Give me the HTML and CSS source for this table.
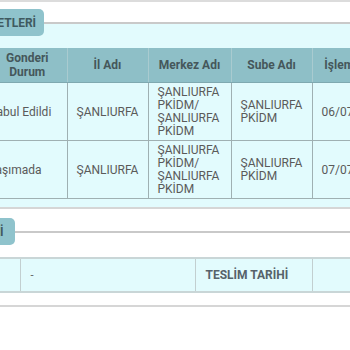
FILE: index.html
```html
<!DOCTYPE html>
<html lang="tr">
<head>
<meta charset="utf-8">
<link rel="stylesheet" href="styles.css">
</head>
<body>
<div class="page">
  <div class="top-rule"></div>

  <section class="block">
    <div class="block-head head-split">
      <span class="tab">GÖNDERİ HAREKETLERİ</span>
      <span class="line"></span>
    </div>
    <div class="panel">
      <table class="grid">
        <colgroup>
          <col class="c1"><col class="c2"><col class="c3"><col class="c4"><col class="c5">
        </colgroup>
        <thead>
          <tr>
            <th>Gonderi<br>Durum</th>
            <th>İl Adı</th>
            <th>Merkez Adı</th>
            <th>Sube Adı</th>
            <th>İşlem Tarihi</th>
          </tr>
        </thead>
        <tbody>
          <tr>
            <td>Kabul Edildi</td>
            <td>ŞANLIURFA</td>
            <td>ŞANLIURFA PKİDM/ ŞANLIURFA PKİDM</td>
            <td>ŞANLIURFA PKİDM</td>
            <td class="date">06/07/2023</td>
          </tr>
          <tr>
            <td>Taşımada</td>
            <td>ŞANLIURFA</td>
            <td>ŞANLIURFA PKİDM/ ŞANLIURFA PKİDM</td>
            <td>ŞANLIURFA PKİDM</td>
            <td class="date">07/07/2023</td>
          </tr>
        </tbody>
      </table>
    </div>
  </section>

  <section class="block block2">
    <div class="block-head">
      <span class="tab tab2">TESLİM BİLGİLERİ</span>
      <span class="line"></span>
    </div>
    <table class="info">
      <colgroup>
        <col class="i1"><col class="i2"><col class="i3"><col class="i4">
      </colgroup>
      <tr>
        <td></td>
        <td>-</td>
        <td class="lbl">TESLİM TARİHİ</td>
        <td></td>
      </tr>
    </table>
    <div class="bottom-rule"></div>
  </section>
</div>
</body>
</html>
```

FILE: styles.css
```css
html, body {
  margin: 0;
  padding: 0;
  overflow: hidden;
  background: #ffffff;
}

body {
  font-family: Roboto, "Liberation Sans", sans-serif;
  font-size: 12px;
  color: #5a5a5a;
}

.page {
  width: 600px;
  margin-left: -103px;
}

.top-rule {
  height: 2px;
  background: #dcdcdc;
}

.block-head {
  display: flex;
  align-items: center;
  margin-top: 7px;
}

.head-split {
  background: linear-gradient(#ffffff 50%, #e2fbfd 50%);
}

.tab {
  display: flex;
  align-items: center;
  height: 27px;
  padding: 0 8px;
  background: #8fc3cc;
  border-radius: 5px;
  font-weight: 700;
  font-size: 12px;
  color: #3f5a60;
  white-space: nowrap;
}

.tab2 {
  padding-right: 12px;
}

.line {
  flex: 1;
  height: 2px;
  background: #c9c9c9;
}

.panel {
  background: #e2fbfd;
  padding: 12px 0 8px 0;
  border-bottom: 2px solid #d6d6d6;
}

.grid {
  border-collapse: collapse;
  table-layout: fixed;
  margin-left: 91px;
  width: 411px;
}

.grid .c1 { width: 79px; }
.grid .c2 { width: 81px; }
.grid .c3 { width: 83px; }
.grid .c4 { width: 81px; }
.grid .c5 { width: 87px; }

.grid th {
  background: #8ebfc7;
  color: #45575b;
  font-weight: 700;
  text-align: center;
  padding: 3px 4px;
  line-height: 14px;
  border-left: 1px solid #a9cbd0;
  border-bottom: 1px solid #7fa9b0;
  height: 27px;
  white-space: nowrap;
}

.grid th:first-child { border-left: none; }

.grid td {
  padding: 3px 8px 2px 9px;
  line-height: 13px;
  vertical-align: middle;
  border-left: 1px solid #9fb0b2;
  border-bottom: 1px solid #9fb0b2;
  color: #5a5a5a;
}

.grid td:first-child {
  border-left: none;
  padding-left: 1px;
  white-space: nowrap;
}

.grid td.date {
  white-space: nowrap;
}

.block2 .block-head {
  margin-top: 9px;
}

.info {
  border-collapse: collapse;
  table-layout: fixed;
  margin-top: 12px;
  width: 470px;
}

.info .i1 { width: 123px; }
.info .i2 { width: 175px; }
.info .i3 { width: 117px; }
.info .i4 { width: 55px; }

.info td {
  background: #e2fbfd;
  height: 32px;
  padding: 0 10px;
  border: 1px solid #c2cfd0;
  border-top: 2px solid #c9d6d7;
  border-bottom: 2px solid #c9d6d7;
  color: #5a5a5a;
  font-size: 11px;
}

.info td:first-child { border-left: none; }

.info .lbl {
  font-weight: 700;
  font-size: 12px;
  color: #56626a;
}

.bottom-rule {
  height: 2px;
  background: #d6d6d6;
  margin-top: 12px;
}
```
